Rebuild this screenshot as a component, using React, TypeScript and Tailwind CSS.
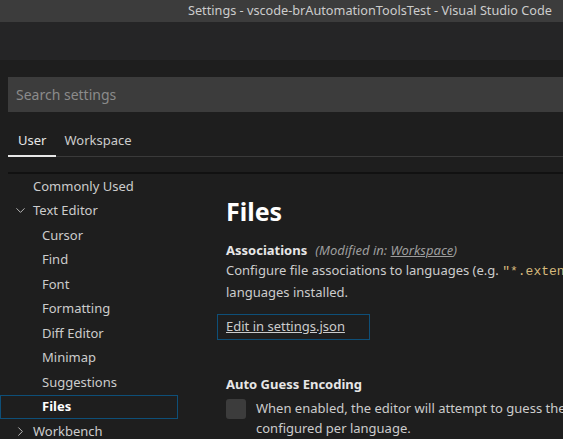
import { ChevronDown, ChevronRight } from "lucide-react";

const font = { fontFamily: '"Noto Sans", "Open Sans", sans-serif' };

const textEditorChildren = ["Cursor", "Find", "Font", "Formatting", "Diff Editor", "Minimap", "Suggestions"];

export default function App() {
  return (
    <div
      className="h-[439px] w-[563px] overflow-hidden bg-[#1e1e1e] text-[13px] text-[#cccccc] font-['Noto_Sans',sans-serif]"
      style={font}
    >
      {/* title bar */}
      <div className="flex h-[22px] items-center justify-end bg-[#3c3c3c] pr-[11px] text-[12.7px] text-[#cccccc]">
        Settings - vscode-brAutomationToolsTest - Visual Studio Code
      </div>
      <div className="h-[38px] bg-[#252526]" />
      <div className="h-[17px] bg-[#1e1e1e]" />

      {/* search */}
      <div className="pl-2">
        <div className="flex h-[35px] items-center bg-[#3c3c3c] pl-2 text-[14px] text-[#8b8b8b]">
          Search settings
        </div>
      </div>

      {/* tabs */}
      <div className="ml-2 mt-[16px] flex h-[29px] items-end border-b border-[#3a3a3a]">
        <div className="relative -mb-px flex h-full items-center border-b-2 border-[#e7e7e7] px-[10px] pb-[3px] text-[#e7e7e7]">
          User
        </div>
        <div className="flex h-full items-center px-[8px] pb-[3px] text-[#cccccc]">Workspace</div>
      </div>
      <div className="ml-2 mt-[15px] h-[2px] bg-[#111111]" />

      <div className="flex">
        {/* tree */}
        <div className="w-[178px] shrink-0">
          <div className="flex h-[24.5px] items-center pl-[33px]">Commonly Used</div>
          <div className="flex h-[24.5px] items-center pl-[13px]">
            <ChevronDown size={15} strokeWidth={1.4} className="mr-[5px]" />
            Text Editor
          </div>
          {textEditorChildren.map((c) => (
            <div key={c} className="flex h-[24.5px] items-center pl-[42px]">
              {c}
            </div>
          ))}
          <div className="flex h-[24.5px] items-center border border-[#0e4f78] pl-[41px] font-bold text-white">
            Files
          </div>
          <div className="flex h-[24.5px] items-center pl-[13px]">
            <ChevronRight size={15} strokeWidth={1.4} className="mr-[5px]" />
            Workbench
          </div>
        </div>

        {/* content */}
        <div className="flex-1 pl-[39px]">
          <div className="pl-[9px] pt-[22px] text-[25px] font-bold leading-[30px] text-white">Files</div>
          <div className="mt-[14px] pl-[9px] leading-[20px]">
            <span className="font-bold text-[#e7e7e7]">Associations</span>
            <span className="ml-[8px] italic text-[#9d9d9d]">
              (Modified in: <span className="underline">Workspace</span>)
            </span>
          </div>
          <div className="pl-[9px] leading-[20px] whitespace-nowrap">
            Configure file associations to languages (e.g.{" "}
            <span className="text-[#d7ba7d]" style={{ fontFamily: '"Liberation Mono", monospace' }}>
              "*.extension"
            </span>
          </div>
          <div className="pl-[9px] leading-[20px]">languages installed.</div>
          <div className="mt-[12px] flex h-[26px] w-[153px] items-center border border-[#0e4f78] pl-[8px] underline">
            Edit in settings.json
          </div>
          <div className="mt-[34px] pl-[9px] font-bold leading-[20px] text-[#e7e7e7]">Auto Guess Encoding</div>
          <div className="mt-[4px] flex pl-[9px]">
            <div className="mt-[1px] h-[20px] w-[20px] shrink-0 rounded-[3px] bg-[#3c3c3c]" />
            <div className="ml-[10px] whitespace-nowrap leading-[20px]">
              When enabled, the editor will attempt to guess the character set encoding when opening files.
              <br />
              configured per language.
            </div>
          </div>
        </div>
      </div>
    </div>
  );
}
